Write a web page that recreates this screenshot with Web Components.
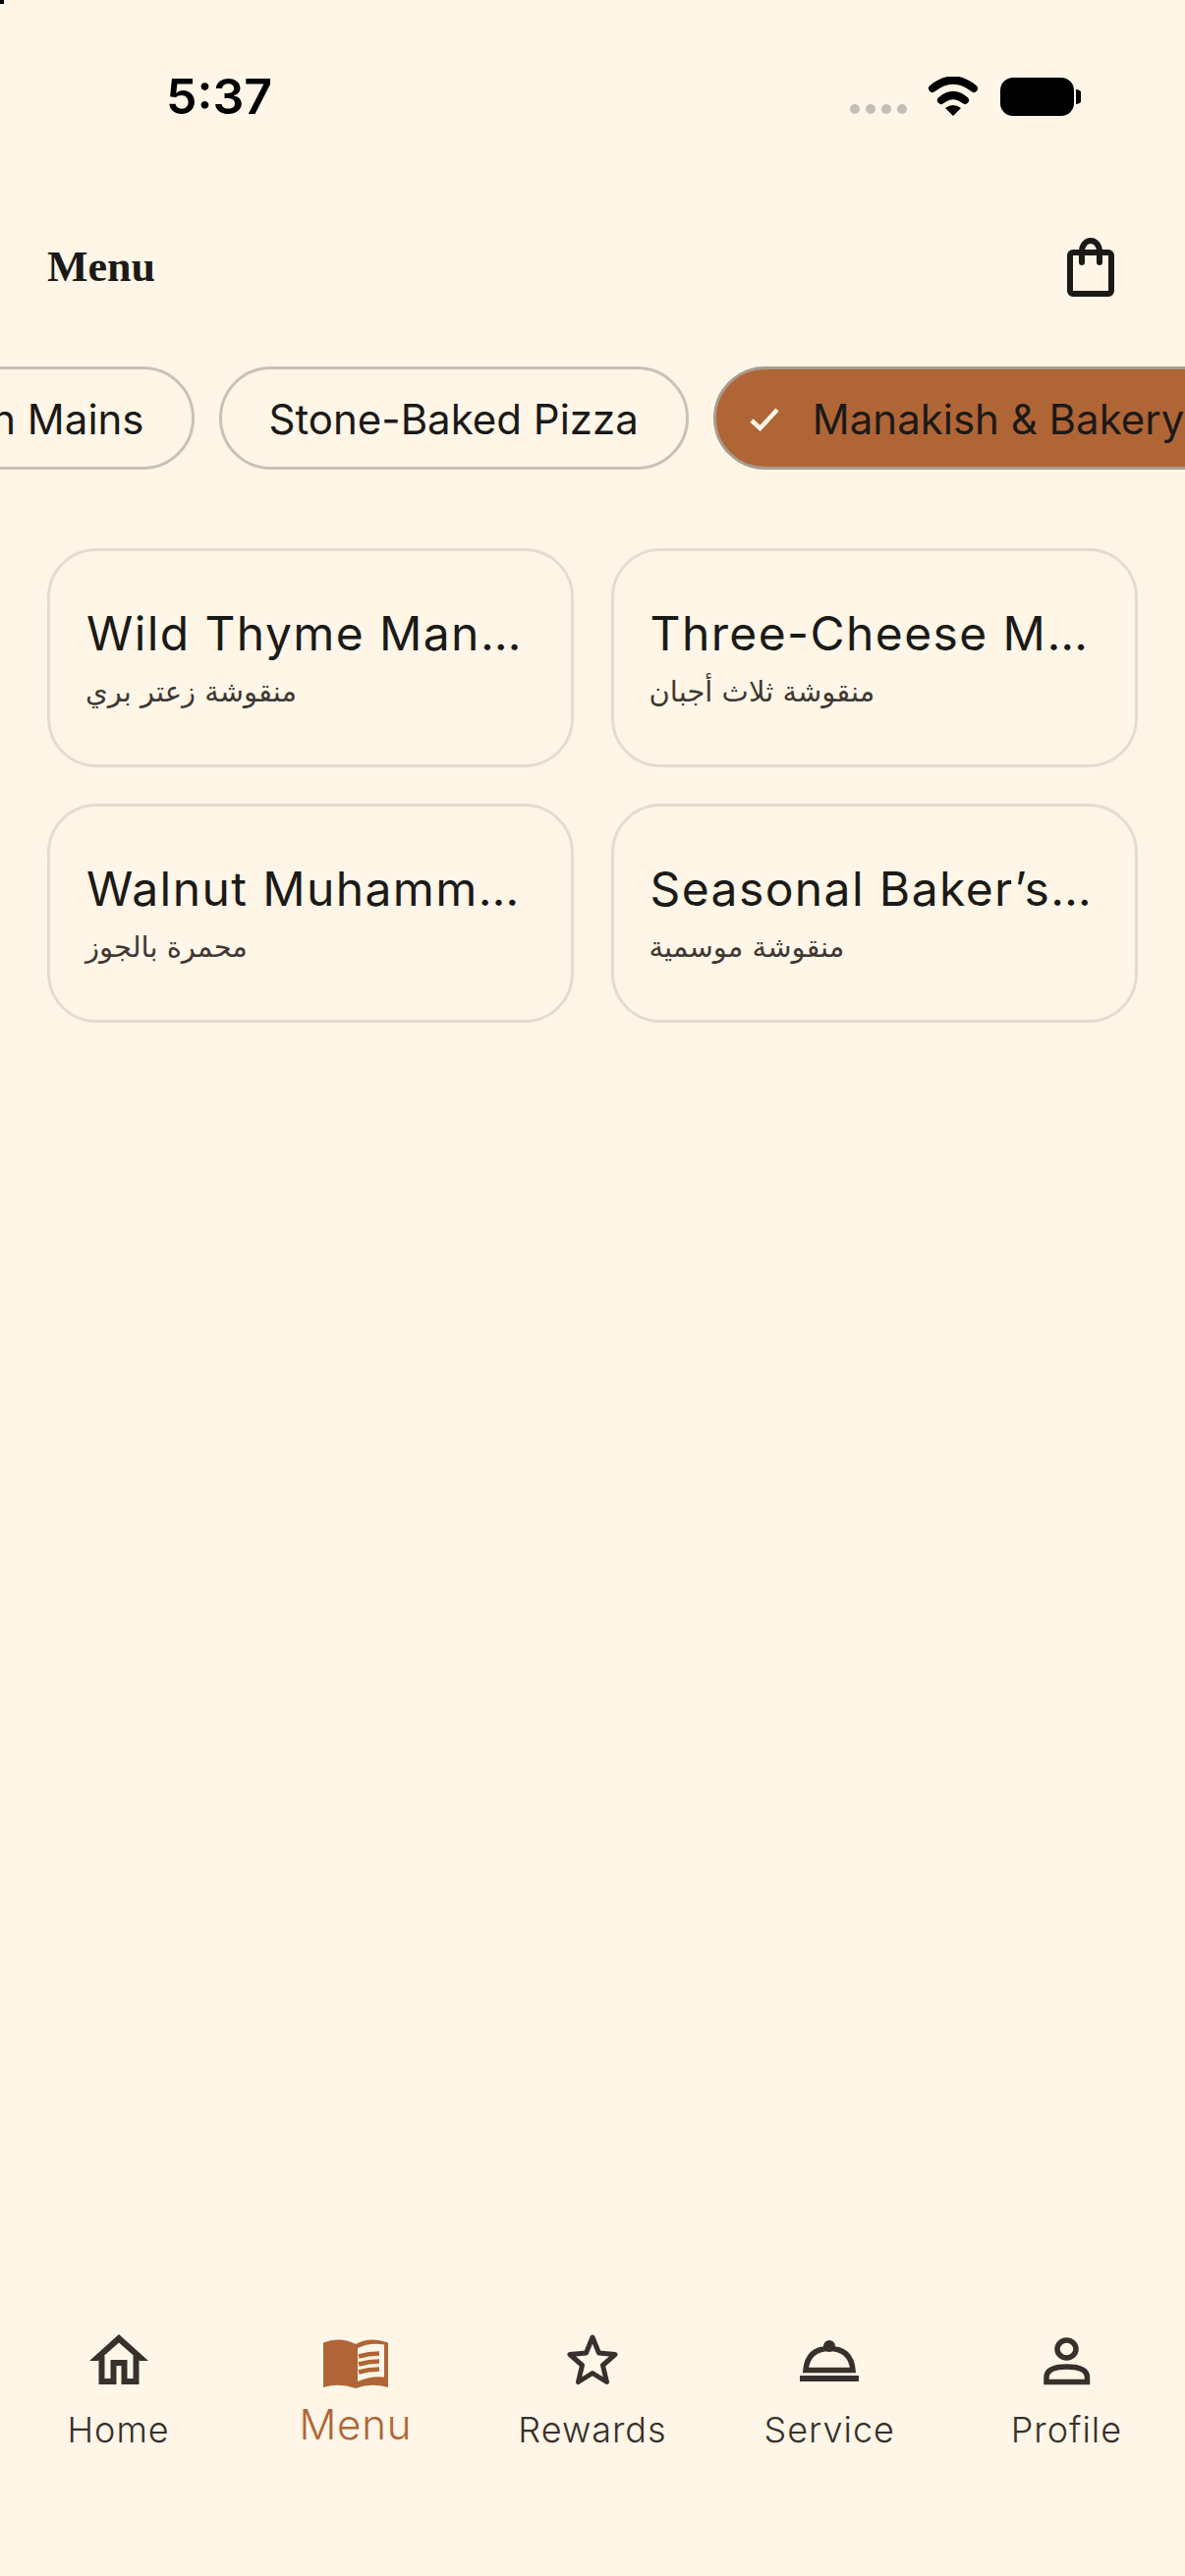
<!DOCTYPE html>
<html lang="en">
<head>
<meta charset="utf-8">
<title>Menu</title>
<style>
  html, body { margin: 0; padding: 0; background: #fff6e8; }
  body { width: 1206px; height: 2622px; overflow: hidden; font-family: Inter, "Noto Sans", sans-serif; }
</style>
</head>
<body>
<menu-app>
  <status-bar slot="top" time="5:37"></status-bar>
  <top-bar slot="top" title="Menu"></top-bar>
  <chip-row slot="top">
    <menu-chip>Garden Mains</menu-chip>
    <menu-chip>Stone-Baked Pizza</menu-chip>
    <menu-chip selected>Manakish &amp; Bakery</menu-chip>
    <menu-chip>Sweets</menu-chip>
  </chip-row>
  <card-grid slot="top">
    <menu-card name="Wild Thyme Manakish" arabic="منقوشة زعتر بري"></menu-card>
    <menu-card name="Three-Cheese Manakish" arabic="منقوشة ثلاث أجبان"></menu-card>
    <menu-card name="Walnut Muhammara" arabic="محمرة بالجوز"></menu-card>
    <menu-card name="Seasonal Baker’s Manakish" arabic="منقوشة موسمية"></menu-card>
  </card-grid>
  <bottom-nav slot="bottom">
    <nav-item label="Home" icon="home"></nav-item>
    <nav-item label="Menu" icon="book" active></nav-item>
    <nav-item label="Rewards" icon="star"></nav-item>
    <nav-item label="Service" icon="cloche"></nav-item>
    <nav-item label="Profile" icon="person"></nav-item>
  </bottom-nav>
</menu-app>

<script>
class MenuApp extends HTMLElement {
  constructor() {
    super();
    this.attachShadow({ mode: "open" }).innerHTML = `
      <style>
        :host { display: flex; flex-direction: column; height: 2622px; background: #fff6e8; color: #1b1a17; position: relative; }
        .main { flex: 1; min-height: 0; }
        .corner { position: absolute; left: 0; top: 0; width: 4px; height: 4px; background: #000; }
      </style>
      <div class="corner"></div>
      <div class="main"><slot name="top"></slot></div>
      <slot name="bottom"></slot>
    `;
  }
}

class StatusBar extends HTMLElement {
  constructor() {
    super();
    this.attachShadow({ mode: "open" }).innerHTML = `
      <style>
        :host { display: flex; align-items: center; box-sizing: border-box; height: 194px; padding: 2px 106px 0 169px; }
        .time { font: 600 50px/60px Inter, sans-serif; color: #000; flex: 1; }
        .icons { display: flex; align-items: flex-start; margin-top: 2px; }
        svg { display: block; }
      </style>
      <div class="time"></div>
      <div class="icons">
        <svg width="235" height="42" viewBox="0 0 235 42">
          <g fill="#c4bfb6">
            <circle cx="5" cy="33" r="5"/><circle cx="21" cy="33" r="5"/><circle cx="37" cy="33" r="5"/><circle cx="53" cy="33" r="5"/>
          </g>
          <g fill="none" stroke="#000" stroke-width="8" stroke-linecap="round">
            <path d="M84 12Q105 -5 126 12"/>
            <path d="M93 24Q105 14 117 24"/>
          </g>
          <path d="M97 32Q105 26 113 32L105 40Z" fill="#000"/>
          <rect x="153" y="1" width="75" height="39" rx="13" fill="#000"/>
          <path d="M230 13a7 7 0 0 1 0 15Z" fill="#000"/>
        </svg>
      </div>
    `;
    this.shadowRoot.querySelector(".time").textContent = this.getAttribute("time");
  }
}

class TopBar extends HTMLElement {
  constructor() {
    super();
    this.attachShadow({ mode: "open" }).innerHTML = `
      <style>
        :host { display: flex; align-items: center; justify-content: space-between; box-sizing: border-box; height: 156px; padding: 0 72px 0 48px; }
        h1 { margin: 0; font: 700 44px/48px "Liberation Serif", serif; color: #1b1a17; }
        svg { display: block; }
      </style>
      <h1></h1>
      <svg width="48" height="60" viewBox="0 0 48 60" fill="none" stroke="#1b1a17" stroke-width="6" stroke-linecap="round" stroke-linejoin="round">
        <rect x="3" y="15" width="42" height="42" rx="3"/>
        <path d="M15 25V14a9 11 0 0 1 18 0V25"/>
      </svg>
    `;
    this.shadowRoot.querySelector("h1").textContent = this.getAttribute("title");
  }
}

class ChipRow extends HTMLElement {
  constructor() {
    super();
    this.attachShadow({ mode: "open" }).innerHTML = `
      <style>
        :host { display: block; overflow: hidden; padding-top: 23px; }
        .track { display: flex; gap: 25px; margin-left: -180px; width: max-content; }
      </style>
      <div class="track"><slot></slot></div>
    `;
  }
}

class MenuChip extends HTMLElement {
  constructor() {
    super();
    this.attachShadow({ mode: "open" }).innerHTML = `
      <style>
        :host { display: flex; align-items: center; box-sizing: border-box; height: 105px; padding: 2px 48px 0; border: 3px solid #c9c2b4; border-radius: 53px; font: 400 42px/51px Inter, sans-serif; color: #1b1a17; white-space: nowrap; }
        :host([selected]) { background: #b06537; border-color: #a89c8d; padding-left: 34px; }
        svg { display: none; margin-right: 34px; }
        :host([selected]) svg { display: block; }
      </style>
      <svg width="30" height="24" viewBox="0 0 30 24" fill="none" stroke="#fff6e8" stroke-width="4.5"><path d="M2 13L10.500 21L28 2"/></svg>
      <slot></slot>
    `;
  }
}

class CardGrid extends HTMLElement {
  constructor() {
    super();
    this.attachShadow({ mode: "open" }).innerHTML = `
      <style>
        :host { display: grid; grid-template-columns: 536px 536px; gap: 37px 37.5px; padding: 80px 48px 0 48px; }
      </style>
      <slot></slot>
    `;
  }
}

class MenuCard extends HTMLElement {
  constructor() {
    super();
    this.attachShadow({ mode: "open" }).innerHTML = `
      <style>
        :host { display: flex; flex-direction: column; justify-content: center; box-sizing: border-box; height: 223px; padding: 0 37px; border: 3px solid #e3ddd0; border-radius: 50px; min-width: 0; }
        .name { font: 400 48px/58px Inter, sans-serif; letter-spacing: 1.4px; color: #1b1a17; white-space: nowrap; overflow: hidden; text-overflow: ellipsis; }
        .arabic { margin: 10px 0 0 -1px; font: 400 29px/40px "DejaVu Sans", sans-serif; color: #3f3832; direction: rtl; text-align: right; align-self: flex-start; }
      </style>
      <div class="name"></div>
      <div class="arabic"></div>
    `;
    this.shadowRoot.querySelector(".name").textContent = this.getAttribute("name");
    this.shadowRoot.querySelector(".arabic").textContent = this.getAttribute("arabic");
  }
}

class BottomNav extends HTMLElement {
  constructor() {
    super();
    this.attachShadow({ mode: "open" }).innerHTML = `
      <style>
        :host { display: grid; grid-template-columns: repeat(5, 1fr); box-sizing: border-box; height: 276px; padding-top: 30px; background: #fff6e8; box-shadow: 0 -6px 8px rgba(120, 90, 50, 0.012); }
      </style>
      <slot></slot>
    `;
  }
}

const ICONS = {
  home: `<svg width="60" height="52" viewBox="0 0 60 52" fill="none" stroke="#37302b" stroke-width="6"><path d="M30 0L60 27H51L30 8.500L9 27H0Z" fill="#37302b" stroke="none"/><path d="M12.500 22V48H24.500V29H35.500V48H47.500V22"/></svg>`,
  book: `<svg width="66" height="52" viewBox="0 0 66 52" overflow="visible"><g transform="translate(0 5)"><path fill="#b06537" d="M0 3.500Q17 -3 33 5Q48 -3 66 3.500V49Q48 44 33 50Q16 44 0 49Z"/><path fill="#fff6e8" d="M35 9Q47 3 62 5.500V38.500Q48 37 35 43Z"/><g fill="none" stroke="#b06537" stroke-width="4.500"><path d="M36 17.500Q46 14.500 57 14.500"/><path d="M36 25.500Q46 22.500 57 22.500"/><path d="M36 33.500Q46 30.500 57 30.500"/></g></g></svg>`,
  star: `<svg width="52" height="52" viewBox="0 0 52 52" fill="none" stroke="#37302b" stroke-width="5" stroke-linejoin="round"><path d="M26 3L32.500 19L49 20.500L36.500 31.500L40.500 48.500L26 39.500L11.500 48.500L15.500 31.500L3 20.500L19.500 19Z"/></svg>`,
  cloche: `<svg width="60" height="52" viewBox="0 0 60 52" fill="none" stroke="#37302b"><circle cx="30" cy="12" r="6" fill="#37302b" stroke="none"/><path d="M6 36.500Q8 14.500 30 14.500Q52 14.500 54 36.500Z" stroke-width="5.500"/><path d="M0 45H60" stroke-width="6"/></svg>`,
  person: `<svg width="60" height="52" viewBox="0 0 60 52" fill="none" stroke="#37302b" stroke-width="5.500"><ellipse cx="30.500" cy="15" rx="9.500" ry="9"/><path d="M10 48.500V44Q10 33 30.500 33Q51.500 33 51.500 44V48.500Z"/></svg>`
};

class NavItem extends HTMLElement {
  constructor() {
    super();
    this.attachShadow({ mode: "open" }).innerHTML = `
      <style>
        :host { display: flex; flex-direction: column; align-items: center; color: #37302b; }
        :host([active]) { color: #b06537; }
        .icon { height: 52px; display: flex; align-items: center; }
        .label { margin-top: 23px; font: 350 36px/44px Inter, sans-serif; letter-spacing: 1px; }
        :host([active]) .label { margin-top: 15px; font-size: 42px; line-height: 50px; letter-spacing: 0.8px; }
        svg { display: block; }
      </style>
      <div class="icon"></div>
      <div class="label"></div>
    `;
    this.shadowRoot.querySelector(".icon").innerHTML = ICONS[this.getAttribute("icon")];
    this.shadowRoot.querySelector(".label").textContent = this.getAttribute("label");
  }
}

customElements.define("menu-app", MenuApp);
customElements.define("status-bar", StatusBar);
customElements.define("top-bar", TopBar);
customElements.define("chip-row", ChipRow);
customElements.define("menu-chip", MenuChip);
customElements.define("card-grid", CardGrid);
customElements.define("menu-card", MenuCard);
customElements.define("bottom-nav", BottomNav);
customElements.define("nav-item", NavItem);
</script>
</body>
</html>
